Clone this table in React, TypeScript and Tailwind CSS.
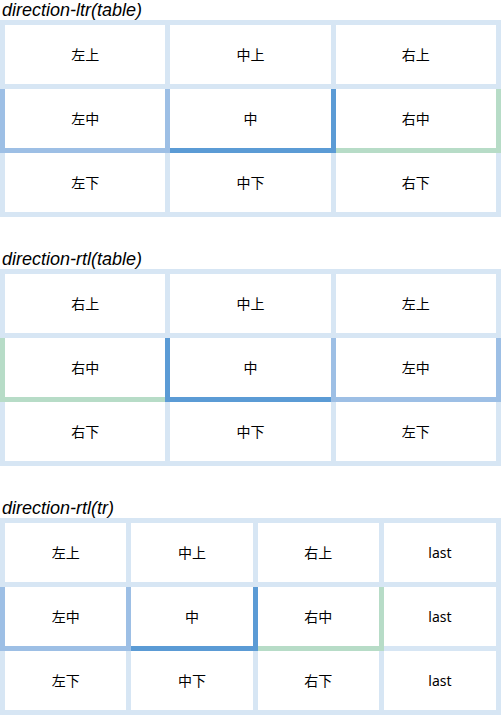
type Tone = 'plain' | 'soft' | 'deep' | 'green';

interface Cell {
  text: string;
  tone?: Tone;
}

const toneClass: Record<Tone, string> = {
  plain: 'border-[#d7e6f4]',
  soft: 'border-[#9dbfe5]',
  deep: 'border-[#5b9bd5]',
  green: 'border-[#b7dcc7]',
};

const threeCols: Cell[][] = [
  [{ text: '左上' }, { text: '中上' }, { text: '右上' }],
  [
    { text: '左中', tone: 'soft' },
    { text: '中', tone: 'deep' },
    { text: '右中', tone: 'green' },
  ],
  [{ text: '左下' }, { text: '中下' }, { text: '右下' }],
];

const fourCols: Cell[][] = [
  [{ text: '左上' }, { text: '中上' }, { text: '右上' }, { text: 'last' }],
  [
    { text: '左中', tone: 'soft' },
    { text: '中', tone: 'deep' },
    { text: '右中', tone: 'green' },
    { text: 'last' },
  ],
  [{ text: '左下' }, { text: '中下' }, { text: '右下' }, { text: 'last' }],
];

function DemoTable({
  title,
  rows,
  tableDir,
  rowDir,
  last,
}: {
  title: string;
  rows: Cell[][];
  tableDir?: 'rtl';
  rowDir?: 'rtl';
  last?: boolean;
}) {
  return (
    <div className={last ? '' : 'mb-8'}>
      <div className="pl-[2px] text-[18px] leading-[20px] italic font-normal text-black font-['Liberation_Sans',Arial,sans-serif]">
        {title}
      </div>
      <table dir={tableDir} className="w-full border-collapse">
        <tbody>
          {rows.map((row, i) => (
            <tr key={i} dir={rowDir}>
              {row.map((c, j) => (
                <td
                  key={j}
                  className={`border-[5px] border-solid ${toneClass[c.tone ?? 'plain']} px-4 py-5 text-center text-[14px] leading-[19px] text-black font-['Noto_Sans','Noto_Sans_CJK_SC',sans-serif]`}
                >
                  {c.text}
                </td>
              ))}
            </tr>
          ))}
        </tbody>
      </table>
    </div>
  );
}

export default function App() {
  return (
    <div className="w-[501px] bg-white">
      <DemoTable title="direction-ltr(table)" rows={threeCols} />
      <DemoTable title="direction-rtl(table)" rows={threeCols} tableDir="rtl" />
      <DemoTable title="direction-rtl(tr)" rows={fourCols} rowDir="rtl" last />
    </div>
  );
}
